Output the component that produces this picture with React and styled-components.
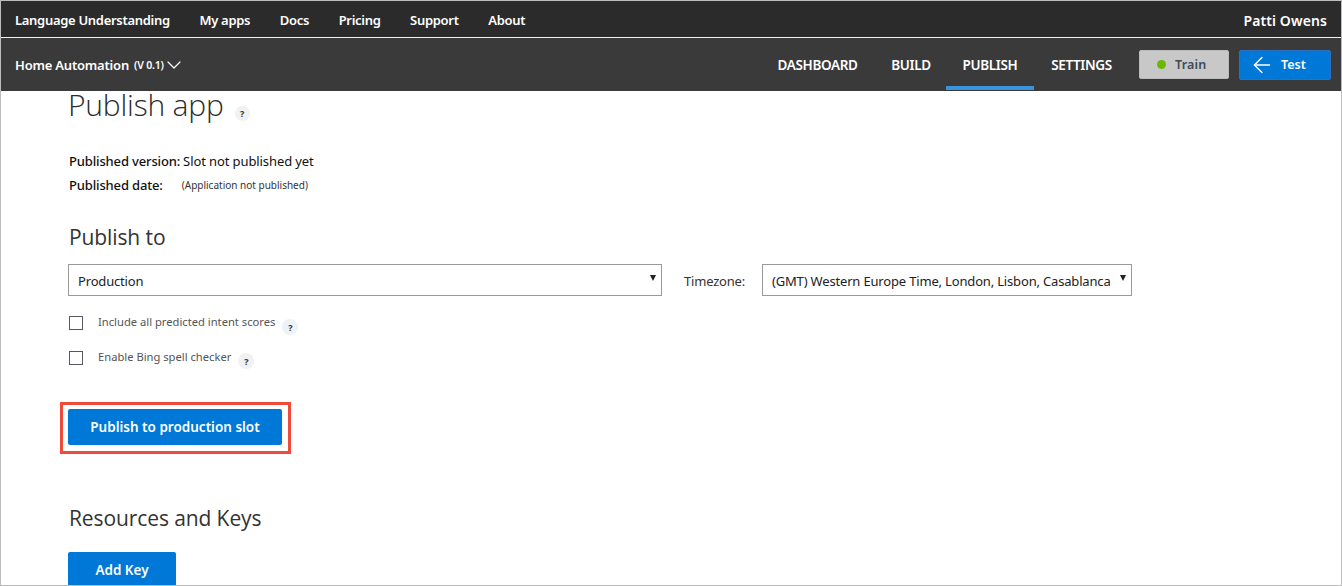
import styled, { createGlobalStyle } from 'styled-components';
import { ArrowLeft, ChevronDown } from 'lucide-react';

const GlobalStyle = createGlobalStyle`
    html, body {
        margin: 0;
        padding: 0;
        background: #fff;
    }
    * {
        box-sizing: border-box;
    }
`

const Page = styled.div`
    width: 1342px;
    height: 586px;
    overflow: hidden;
    border: 1px solid #bdbdbd;
    font-family: "Noto Sans", "Open Sans", sans-serif;
    color: #222;
    display: flex;
    flex-direction: column;
`

const TopBar = styled.nav`
    height: 36px;
    flex: none;
    background: #2b2b2b;
    display: flex;
    align-items: center;
    justify-content: space-between;
    padding: 1px 14px 0 14px;
`

const TopLinks = styled.div`
    display: flex;
    align-items: center;
    gap: 29.6px;
`

const TopLink = styled.a`
    color: #fff;
    font-size: 13px;
    font-weight: 600;
    letter-spacing: -0.3px;
`

const UserName = styled.span`
    color: #fff;
    font-size: 14px;
    font-weight: 600;
    letter-spacing: 0.1px;
    margin-top: 2px;
`

const SubBar = styled.div`
    height: 54px;
    flex: none;
    background: #3a3a3a;
    border-top: 1px solid #f2f2f2;
    display: flex;
    align-items: center;
    justify-content: space-between;
    padding: 0 10px 0 14px;
`

const AppName = styled.div`
    display: flex;
    align-items: center;
    color: #fff;
    font-size: 13px;
    font-weight: 600;
    letter-spacing: -0.2px;
`

const Version = styled.span`
    font-size: 10.5px;
    margin: 1px -2px 0 5px;
`

const SubRight = styled.div`
    display: flex;
    align-items: center;
    height: 100%;
`

const Tabs = styled.div`
    display: flex;
    height: 100%;
`

const Tab = styled.a`
    display: flex;
    align-items: center;
    justify-content: center;
    width: ${p => p.$width}px;
    color: #fff;
    font-size: 13.5px;
    font-weight: 600;
    letter-spacing: -0.35px;
    border-bottom: 4px solid ${p => (p.$active ? '#3a94dc' : 'transparent')};
    padding-top: 6px;
    margin-bottom: 1px;
`

const TrainButton = styled.button`
    width: 90px;
    height: 29px;
    margin-left: 10px;
    background: #c8c8c8;
    border: 1px solid #bbb;
    border-radius: 2px;
    display: flex;
    align-items: center;
    gap: 9px;
    color: #3d4a55;
    font-family: inherit;
    font-size: 12.5px;
    font-weight: 600;
    letter-spacing: 0.2px;
    padding: 0 0 0 17px;
`

const StatusDot = styled.span`
    width: 9px;
    height: 9px;
    border-radius: 50%;
    background: #6cb800;
`

const TestButton = styled.button`
    width: 92px;
    height: 30px;
    margin-left: 10px;
    background: #0078d7;
    border: 1px solid #2f6fc0;
    border-radius: 2px;
    display: flex;
    align-items: center;
    gap: 6px;
    color: #fff;
    font-family: inherit;
    font-size: 12.5px;
    font-weight: 600;
    padding: 0 0 0 9px;
`

const Content = styled.main`
    flex: 1;
    padding: 0 0 0 67px;
`

const TitleRow = styled.div`
    display: flex;
    align-items: flex-start;
    height: 31px;
`

const Title = styled.h1`
    margin: 0;
    font-size: 30px;
    font-weight: 300;
    line-height: 28px;
    color: #2b2b2b;
    font-family: "Open Sans", sans-serif;
    letter-spacing: -0.2px;
`

const Help = styled.span`
    width: ${p => p.$size}px;
    height: ${p => p.$size}px;
    flex: none;
    border-radius: 50%;
    background: ${p => p.$tint || '#f1f1f1'};
    color: #333;
    font-size: 9px;
    font-weight: 700;
    display: flex;
    align-items: center;
    justify-content: center;
    margin-left: ${p => p.$gap}px;
    margin-top: ${p => p.$drop}px;
`

const InfoBlock = styled.div`
    margin: 30px 0 0 1px;
    display: flex;
    flex-direction: column;
    gap: 7px;
`

const InfoRow = styled.div`
    display: flex;
    align-items: center;
    height: 17px;
    font-size: 13px;
    letter-spacing: -0.1px;
    color: #111;
`

const InfoLabel = styled.span`
    font-weight: 500;
    letter-spacing: -0.15px;
    margin-right: 3px;
`

const InfoNote = styled.span`
    font-size: 10px;
    margin-left: 16px;
    margin-top: 1px;
    letter-spacing: 0;
    color: #333;
`

const SectionTitle = styled.h2`
    margin: ${p => p.$top}px 0 0 1px;
    font-size: 21px;
    line-height: 28px;
    font-weight: 400;
    letter-spacing: -0.1px;
    color: #333;
    font-family: "Open Sans", sans-serif;
`

const PublishRow = styled.div`
    display: flex;
    align-items: center;
    margin-top: 13px;
`

const SelectBox = styled.div`
    position: relative;
    width: ${p => p.$width}px;
    height: 32px;
    border: 1px solid #999;
    display: flex;
    align-items: center;
    padding: 2px 0 0 9px;
    font-size: 13px;
    letter-spacing: -0.17px;
    color: #222;
    white-space: nowrap;
`

const Caret = styled.span`
    position: absolute;
    right: 5px;
    top: 10px;
    width: 0;
    height: 0;
    border-left: 3.5px solid transparent;
    border-right: 3.5px solid transparent;
    border-top: 6px solid #222;
`

const ZoneLabel = styled.span`
    font-size: 13px;
    letter-spacing: -0.2px;
    color: #333;
    margin: 2px 17px 0 22px;
`

const CheckRow = styled.label`
    display: flex;
    align-items: flex-start;
    height: 20px;
    margin-top: ${p => p.$top}px;
`

const Box = styled.span`
    width: 14px;
    height: 14px;
    flex: none;
    margin: 2px 15px 0 1px;
    border: 1px solid #5b5566;
`

const CheckText = styled.span`
    font-size: 11.2px;
    line-height: 16px;
    color: #555;
`

const PrimaryButton = styled.button`
    display: block;
    width: ${p => p.$width}px;
    height: 36px;
    margin-top: ${p => p.$top || 0}px;
    background: #0078d7;
    border: 0;
    border-radius: 2px;
    color: #fff;
    font-family: inherit;
    font-size: 13.5px;
    font-weight: 600;
    padding: 0;
`

const Highlight = styled.div`
    width: 231px;
    height: 52px;
    margin: 33px 0 0 -8px;
    border: 3px solid #ef4a3a;
    padding: 4px 5px;
`

export default function App() {
    return (
        <Page>
            <GlobalStyle />
            <TopBar>
                <TopLinks>
                    <TopLink>Language Understanding</TopLink>
                    <TopLink>My apps</TopLink>
                    <TopLink>Docs</TopLink>
                    <TopLink>Pricing</TopLink>
                    <TopLink>Support</TopLink>
                    <TopLink>About</TopLink>
                </TopLinks>
                <UserName>Patti Owens</UserName>
            </TopBar>
            <SubBar>
                <AppName>
                    Home Automation <Version>(V 0.1)</Version>
                    <ChevronDown size={24} strokeWidth={1.25} color="#fff" />
                </AppName>
                <SubRight>
                    <Tabs>
                        <Tab $width={117}>DASHBOARD</Tab>
                        <Tab $width={70}>BUILD</Tab>
                        <Tab $width={88} $active>PUBLISH</Tab>
                        <Tab $width={95}>SETTINGS</Tab>
                    </Tabs>
                    <TrainButton><StatusDot />Train</TrainButton>
                    <TestButton><ArrowLeft size={26} strokeWidth={1.2} color="#fff" />Test</TestButton>
                </SubRight>
            </SubBar>
            <Content>
                <TitleRow>
                    <Title>Publish app</Title>
                    <Help $gap={11} $drop={15} $size={15}>?</Help>
                </TitleRow>
                <InfoBlock>
                    <InfoRow><InfoLabel>Published version:</InfoLabel>Slot not published yet</InfoRow>
                    <InfoRow><InfoLabel>Published date:</InfoLabel><InfoNote>(Application not published)</InfoNote></InfoRow>
                </InfoBlock>
                <SectionTitle $top={30}>Publish to</SectionTitle>
                <PublishRow>
                    <SelectBox $width={594}>Production<Caret /></SelectBox>
                    <ZoneLabel>Timezone:</ZoneLabel>
                    <SelectBox $width={370}>(GMT) Western Europe Time, London, Lisbon, Casablanca<Caret /></SelectBox>
                </PublishRow>
                <CheckRow $top={18}>
                    <Box />
                    <CheckText>Include all predicted intent scores</CheckText>
                    <Help $gap={7} $drop={5} $size={16} $tint="#eef1f5">?</Help>
                </CheckRow>
                <CheckRow $top={15}>
                    <Box />
                    <CheckText>Enable Bing spell checker</CheckText>
                    <Help $gap={7} $drop={4} $size={16}>?</Help>
                </CheckRow>
                <Highlight>
                    <PrimaryButton $width={214}>Publish to production slot</PrimaryButton>
                </Highlight>
                <SectionTitle $top={50}>Resources and Keys</SectionTitle>
                <PrimaryButton $width={108} $top={20}>Add Key</PrimaryButton>
            </Content>
        </Page>
    )
}
